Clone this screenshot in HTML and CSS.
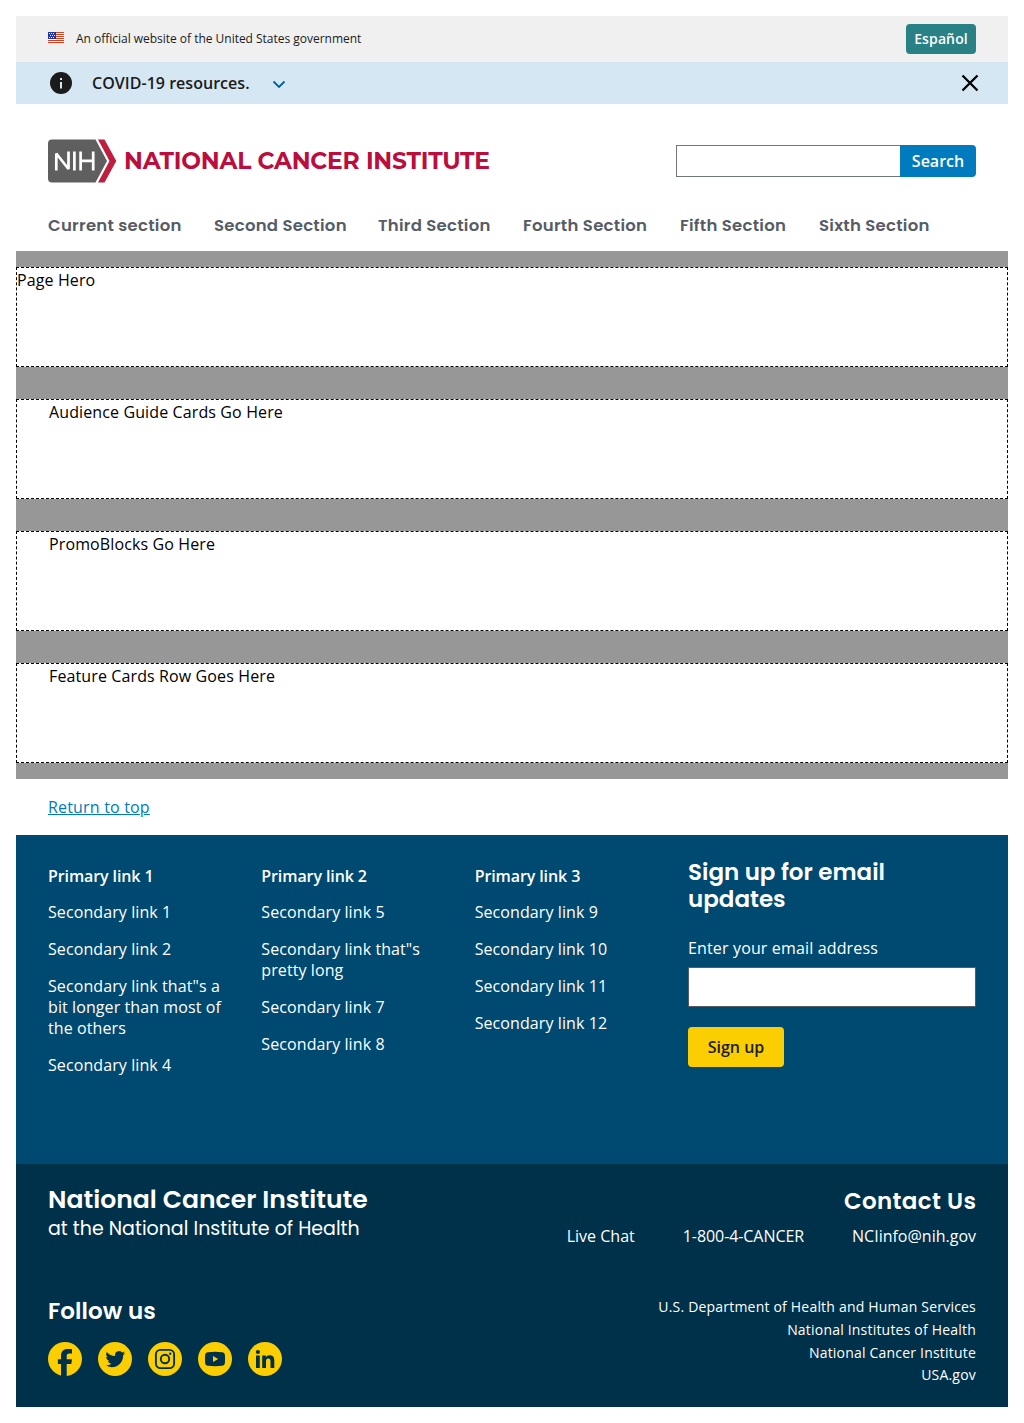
FILE: index.html
```html
<!DOCTYPE html>
<html lang="en">
<head>
<meta charset="utf-8">
<title>National Cancer Institute</title>
<link rel="stylesheet" href="styles.css">
</head>
<body>
<section class="gov-banner">
  <svg class="flag" viewBox="0 0 16 11" shape-rendering="crispEdges" aria-hidden="true">
    <path fill="#fff" d="M0 0h16v11H0z"/>
    <path fill="#db3e1f" d="M0 0h16v1H0zM0 2h16v1H0zM0 4h16v1H0zM0 6h16v1H0zM0 8h16v1H0zM0 10h16v1H0z"/>
    <path fill="#1e33b1" d="M0 0h8v7H0z"/>
    <path fill="#fff" d="M1 1h1v1H1zM3 1h1v1H3zM5 1h1v1H5zM2 3h1v1H2zM4 3h1v1H4zM6 3h1v1H6zM1 5h1v1H1zM3 5h1v1H3zM5 5h1v1H5z"/>
  </svg>
  <span class="gov-text">An official website of the United States government</span>
  <a class="language">Español</a>
</section>
<section class="alert">
  <svg class="info" viewBox="0 0 24 24" aria-hidden="true"><path fill="#1b1b1b" d="M12 1a11 11 0 1 0 0 22 11 11 0 0 0 0-22zm1 16.5h-2V11h2zm0-8.6h-2v-2h2z"/></svg>
  <strong class="alert-title">COVID-19 resources.</strong>
  <svg class="chevron" viewBox="0 0 14 9" aria-hidden="true"><path fill="none" stroke="#00629b" stroke-width="1.8" d="M1.5 1.5 7 7l5.500-5.500"/></svg>
  <svg class="close" viewBox="0 0 18 18" aria-hidden="true"><path fill="none" stroke="#000" stroke-width="2.300" d="m1.500 1.500 15 15m0-15-15 15"/></svg>
</section>
<header class="header">
  <div class="brand-row">
    <svg class="logo" viewBox="0 0 444 44" role="img" aria-label="NIH National Cancer Institute">
      <path fill="#5f5f5f" d="M4 .5h43.500L59 22 47.500 43.500H4a4 4 0 0 1-4-4v-35a4 4 0 0 1 4-4z"/>
      <path fill="#bc1f3f" d="M50 .5h6.500L68.300 22 56.500 43.500H50L61.500 22z"/>
      <path fill="none" stroke="#fff" stroke-width="2.700" stroke-linejoin="bevel" d="M8.300 31.500V14.500L20.500 30V12.500M26.400 12.500v19M32.600 12.500v19M45.200 12.500v19M32.600 21.800h12.600"/>
      <text class="logo-text" x="76" y="30" textLength="366" lengthAdjust="spacing">NATIONAL CANCER INSTITUTE</text>
    </svg>
    <form class="search"><input class="search-input" aria-label="Search"><button class="search-button" type="button">Search</button></form>
  </div>
  <nav class="nav">
    <a class="w1">Current section</a><a class="w2">Second Section</a><a class="w3">Third Section</a><a class="w4">Fourth Section</a><a class="w5">Fifth Section</a><a class="w6">Sixth Section</a>
  </nav>
</header>
<main class="main">
  <div class="slot hero">Page Hero</div>
  <div class="slot">Audience Guide Cards Go Here</div>
  <div class="slot">PromoBlocks Go Here</div>
  <div class="slot">Feature Cards Row Goes Here</div>
</main>
<div class="return"><a>Return to top</a></div>
<footer>
  <div class="footer-main">
    <div class="links"><h3>Primary link 1</h3><a>Secondary link 1</a><a>Secondary link 2</a><a>Secondary link that"s a bit longer than most of the others</a><a>Secondary link 4</a></div>
    <div class="links"><h3>Primary link 2</h3><a>Secondary link 5</a><a>Secondary link that"s pretty long</a><a>Secondary link 7</a><a>Secondary link 8</a></div>
    <div class="links"><h3>Primary link 3</h3><a>Secondary link 9</a><a>Secondary link 10</a><a>Secondary link 11</a><a>Secondary link 12</a></div>
    <form class="signup">
      <h2 class="heading signup-heading">Sign up for email<br>updates</h2>
      <label for="email">Enter your email address</label>
      <input id="email" class="email">
      <button class="signup-button" type="button">Sign up</button>
    </form>
  </div>
  <div class="footer-bottom">
    <div class="about">
      <div><h2 class="heading institute">National Cancer Institute</h2><p class="subtitle">at the National Institute of Health</p></div>
      <div class="contact"><h2 class="heading contact-heading">Contact Us</h2><div class="contact-links"><a>Live Chat</a><a class="phone">1-800-4-CANCER</a><a>NCIinfo@nih.gov</a></div></div>
    </div>
    <div class="social-row">
      <div>
        <h2 class="heading follow">Follow us</h2>
        <div class="social">
          <svg viewBox="0 0 34 34" aria-label="Facebook"><circle cx="17" cy="17" r="17" fill="#face00"/><path fill="#00314a" d="M13 34V22.100H9.900v-4.800H13v-3.600C13 9.500 15.500 7 19.600 7H24v4.500h-2.500c-2.200 0-2.800.9-2.800 2.600v3.200H24l-.7 4.800h-4.600V34z"/></svg>
          <svg viewBox="0 0 34 34" aria-label="Twitter"><circle cx="17" cy="17" r="17" fill="#face00"/><path fill="#00314a" transform="translate(7.500 7.300) scale(.82)" d="M23.950 4.570a10 10 0 0 1-2.820.770 4.960 4.960 0 0 0 2.160-2.720c-.950.550-2 .950-3.130 1.180a4.920 4.920 0 0 0-8.380 4.480C7.690 8.100 4.070 6.130 1.640 3.160a4.920 4.920 0 0 0 1.520 6.570 4.900 4.900 0 0 1-2.230-.610v.060a4.920 4.920 0 0 0 3.950 4.830 5 5 0 0 1-2.210.080 4.940 4.940 0 0 0 4.600 3.420A9.870 9.870 0 0 1 0 19.540a13.940 13.940 0 0 0 7.550 2.210c9.050 0 14-7.500 14-13.980l-.020-.640a9.940 9.940 0 0 0 2.420-2.560z"/></svg>
          <svg viewBox="0 0 34 34" aria-label="Instagram"><circle cx="17" cy="17" r="17" fill="#face00"/><rect x="7.900" y="7.900" width="18.200" height="18.200" rx="4.700" fill="none" stroke="#00314a" stroke-width="1.900"/><circle cx="17" cy="17" r="4.200" fill="none" stroke="#00314a" stroke-width="1.900"/><circle cx="22.200" cy="11.800" r="1.200" fill="#00314a"/></svg>
          <svg viewBox="0 0 34 34" aria-label="YouTube"><circle cx="17" cy="17" r="17" fill="#face00"/><path fill="#00314a" fill-rule="evenodd" d="M10 10.200q7-.7 14 0c2 .2 2.800 1.200 2.900 3q.3 3.800 0 7.600c-.1 1.800-.9 2.800-2.900 3q-7 .7-14 0c-2-.2-2.800-1.200-2.900-3q-.3-3.800 0-7.600c.1-1.800.9-2.800 2.900-3zM15 14v6l5.200-3z"/></svg>
          <svg viewBox="0 0 34 34" aria-label="LinkedIn"><circle cx="17" cy="17" r="17" fill="#face00"/><circle cx="9.900" cy="10" r="2.100" fill="#00314a"/><path fill="#00314a" d="M8 13.500h3.800V26H8zM14.200 13.500h3.600v1.700c.6-1.100 1.900-2 3.800-2 3.900 0 4.700 2.400 4.700 5.800v7h-3.800v-6.200c0-1.700-.1-3.300-2.200-3.300s-2.300 1.600-2.300 3.200V26h-3.800z"/></svg>
        </div>
      </div>
      <div class="agencies"><a>U.S. Department of Health and Human Services</a><a>National Institutes of Health</a><a>National Cancer Institute</a><a>USA.gov</a></div>
    </div>
  </div>
</footer>
</body>
</html>
```
FILE: styles.css
```css
* { box-sizing: border-box; }
body { margin: 16px; font: 16px/24px "Open Sans", sans-serif; letter-spacing: .12px; color: #000; background: #fff; }
h2, h3, p { margin: 0; }
svg { display: block; flex: none; }
input, button { font: inherit; border: 0; padding: 0; border-radius: 0; }
.gov-banner { height: 46px; padding: 0 32px; display: flex; align-items: center; background: #f0f0f0; }
.flag { width: 16px; height: 11px; margin: 0 12px 3px 0; }
.gov-text { font-size: 12px; letter-spacing: -.02px; color: #1b1b1b; }
.language { margin-left: auto; width: 70px; height: 30px; border-radius: 4px; background: #298085; color: #fff; font-size: 14px; font-weight: 600; line-height: 30px; text-align: center; }
.alert { height: 42px; padding: 0 29px 0 33px; display: flex; align-items: center; background: #d5e7f3; }
.info { width: 24px; height: 24px; }
.alert-title { margin-left: 19px; font-weight: 600; letter-spacing: .03px; color: #1b1b1b; }
.chevron { width: 14px; height: 9px; margin: 2px 0 0 22.500px; }
.close { width: 18px; height: 18px; margin-left: auto; }
.header { height: 147px; padding: 35px 32px 0; }
.brand-row { height: 44px; display: flex; justify-content: space-between; align-items: center; }
.logo { width: 444px; height: 44px; overflow: visible; }
.logo-text { font: 700 23.400px Montserrat, Poppins, sans-serif; letter-spacing: 0; fill: #bb0e3d; }
.search { width: 300px; height: 32px; display: flex; }
.search-input { width: 224px; height: 32px; border: 1px solid #71767a; border-right: 0; background: #fff; }
.search-button { width: 76px; height: 32px; background: #007bbd; color: #fff; font-weight: 600; border-radius: 0 4px 4px 0; }
.nav { display: flex; gap: 32px; margin-top: 31px; font: 600 16.500px/24px Poppins, Inter, sans-serif; letter-spacing: .25px; color: #565c65; }
.nav a { white-space: nowrap; }
.w1 { width: 134px; }
.w2 { width: 132px; }
.w3 { width: 113px; }
.w4 { width: 125px; }
.w5 { width: 107px; }
.w6 { width: 110px; }
.main { padding: 16px 0; display: grid; gap: 32px; background: #979797; }
.slot { height: 100px; padding: 0 32px; border: 1px dashed #000; background: #fff; }
.hero { padding: 0; }
.return { height: 56px; padding: 16px 32px; letter-spacing: .18px; color: #007bbd; text-decoration: underline; }
.footer-main { height: 329px; padding: 0 32px; display: grid; grid-template-columns: repeat(3, minmax(0, 181.330px)) 288px; gap: 32px; background: #004971; color: #fff; }
.links { display: flex; flex-direction: column; gap: 16px; padding-top: 31px; line-height: 21px; letter-spacing: .09px; }
.links h3 { font-size: 16px; font-weight: 600; line-height: 21px; letter-spacing: -.1px; margin-bottom: -1px; }
.signup { display: flex; flex-direction: column; align-items: flex-start; padding-top: 24px; }
.heading { font: 600 23px/27px Poppins, Inter, sans-serif; letter-spacing: 0; white-space: nowrap; }
.signup label { margin-top: 23px; line-height: 24px; letter-spacing: .15px; }
.email { width: 288px; height: 40px; margin-top: 7px; border: 1px solid #565c65; background: #fff; }
.signup-button { width: 96px; height: 40px; margin-top: 20px; border-radius: 4px; background: #face00; color: #1b1b1b; font-weight: 600; }
.footer-bottom { height: 243px; padding: 20px 32px 0; background: #00314a; color: #fff; }
.about { height: 114px; display: flex; justify-content: space-between; }
.heading.institute { padding-top: 1px; font-size: 25.100px; line-height: 30px; }
.subtitle { font: 19px/27px Poppins, Inter, sans-serif; letter-spacing: 0; white-space: nowrap; }
.contact { display: flex; flex-direction: column; align-items: flex-end; padding-top: 4px; }
.contact-heading { letter-spacing: .35px; margin-right: -.35px; }
.follow { letter-spacing: .1px; }
.contact-links { display: flex; gap: 48px; margin-top: 9px; letter-spacing: 0; }
.phone { letter-spacing: -.07px; }
.social-row { display: flex; justify-content: space-between; }
.social { display: flex; gap: 16px; margin-top: 17px; }
.social svg { width: 34px; height: 34px; }
.agencies { display: flex; flex-direction: column; align-items: flex-end; margin-top: -2px; font-size: 14px; line-height: 22.750px; letter-spacing: .2px; }
```
